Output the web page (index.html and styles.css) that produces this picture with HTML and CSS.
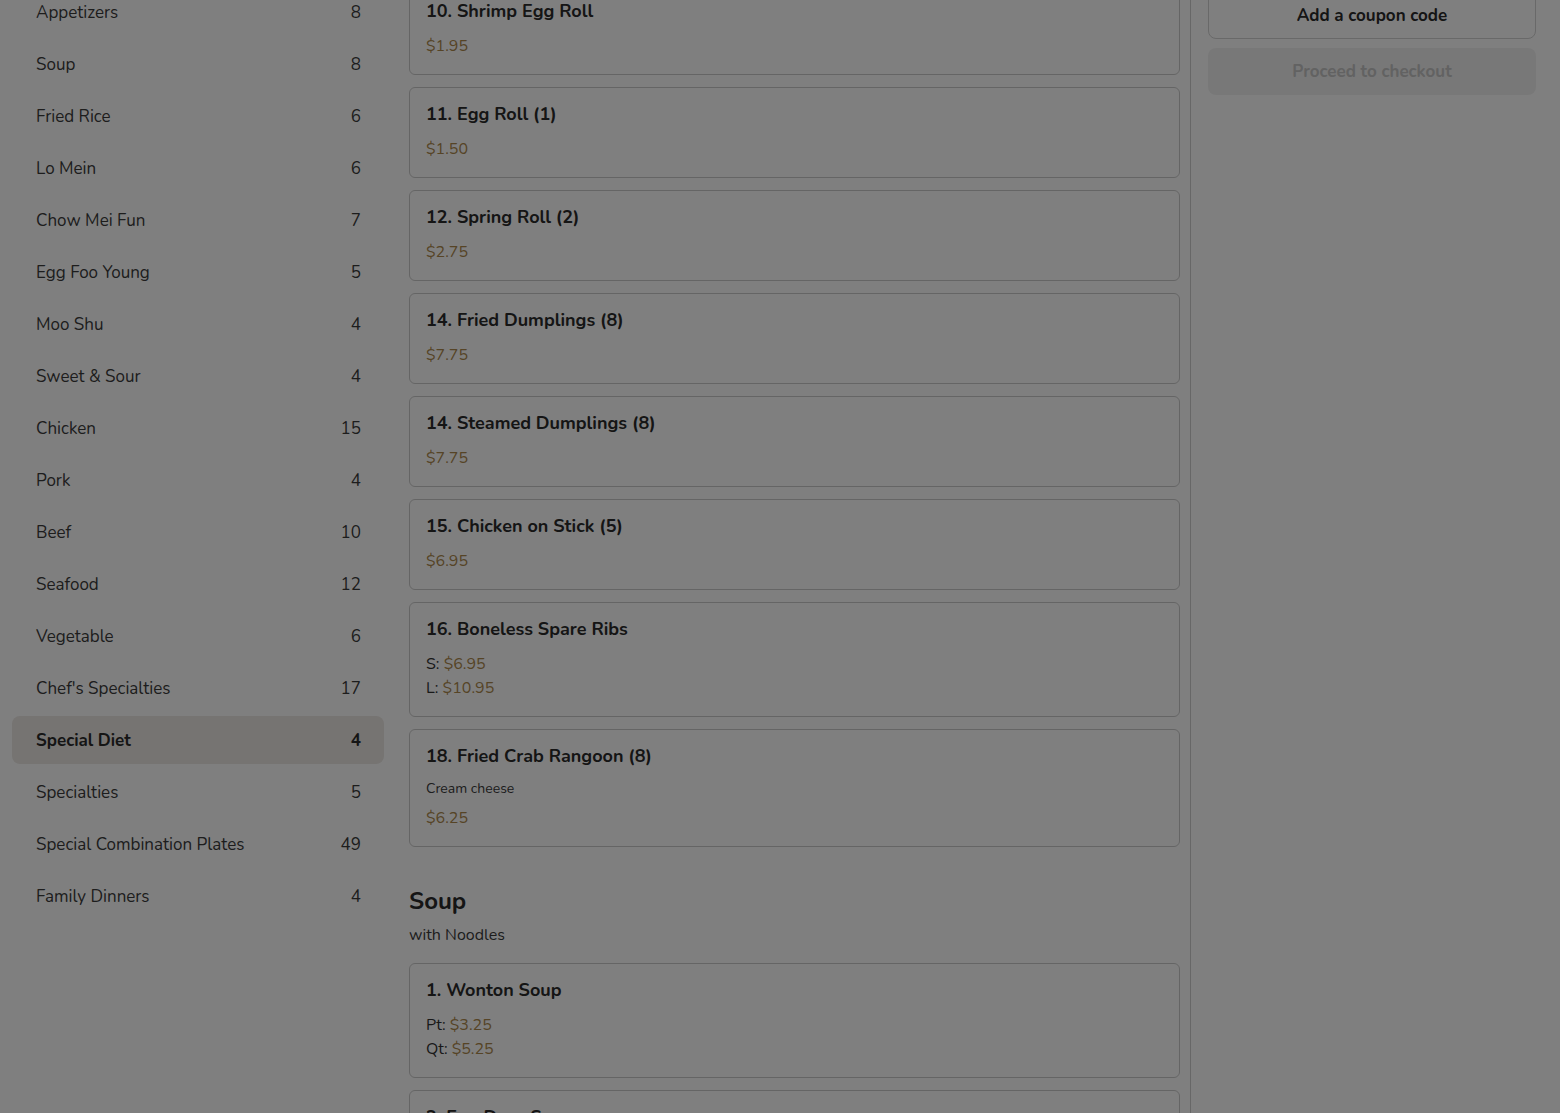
FILE: index.html
```html
<!DOCTYPE html>
<html lang="en">
<head>
<meta charset="utf-8">
<title>Menu</title>
<link rel="stylesheet" href="styles.css">
</head>
<body>
<div class="page">
  <nav class="sidebar">
    <div class="cat"><span>Appetizers</span><span>8</span></div>
    <div class="cat"><span>Soup</span><span>8</span></div>
    <div class="cat"><span>Fried Rice</span><span>6</span></div>
    <div class="cat"><span>Lo Mein</span><span>6</span></div>
    <div class="cat"><span>Chow Mei Fun</span><span>7</span></div>
    <div class="cat"><span>Egg Foo Young</span><span>5</span></div>
    <div class="cat"><span>Moo Shu</span><span>4</span></div>
    <div class="cat"><span>Sweet &amp; Sour</span><span>4</span></div>
    <div class="cat"><span>Chicken</span><span>15</span></div>
    <div class="cat"><span>Pork</span><span>4</span></div>
    <div class="cat"><span>Beef</span><span>10</span></div>
    <div class="cat"><span>Seafood</span><span>12</span></div>
    <div class="cat"><span>Vegetable</span><span>6</span></div>
    <div class="cat"><span>Chef's Specialties</span><span>17</span></div>
    <div class="cat active"><span>Special Diet</span><span>4</span></div>
    <div class="cat"><span>Specialties</span><span>5</span></div>
    <div class="cat"><span>Special Combination Plates</span><span>49</span></div>
    <div class="cat"><span>Family Dinners</span><span>4</span></div>
  </nav>

  <main class="menu">
    <section class="section">
      <div class="cards">
        <div class="card"><div class="title">10. Shrimp Egg Roll</div><div class="prices"><div class="price">$1.95</div></div></div>
        <div class="card"><div class="title">11. Egg Roll (1)</div><div class="prices"><div class="price">$1.50</div></div></div>
        <div class="card"><div class="title">12. Spring Roll (2)</div><div class="prices"><div class="price">$2.75</div></div></div>
        <div class="card"><div class="title">14. Fried Dumplings (8)</div><div class="prices"><div class="price">$7.75</div></div></div>
        <div class="card"><div class="title">14. Steamed Dumplings (8)</div><div class="prices"><div class="price">$7.75</div></div></div>
        <div class="card"><div class="title">15. Chicken on Stick (5)</div><div class="prices"><div class="price">$6.95</div></div></div>
        <div class="card"><div class="title">16. Boneless Spare Ribs</div><div class="prices"><div class="line">S: <span class="price">$6.95</span></div><div class="line">L: <span class="price">$10.95</span></div></div></div>
        <div class="card"><div class="title">18. Fried Crab Rangoon (8)</div><div class="desc">Cream cheese</div><div class="prices after-desc"><div class="price">$6.25</div></div></div>
      </div>
    </section>
    <section class="section">
      <h2 class="sec-title">Soup</h2>
      <p class="sec-sub">with Noodles</p>
      <div class="cards">
        <div class="card"><div class="title">1. Wonton Soup</div><div class="prices"><div class="line">Pt: <span class="price">$3.25</span></div><div class="line">Qt: <span class="price">$5.25</span></div></div></div>
        <div class="card"><div class="title">2. Egg Drop Soup</div><div class="prices"><div class="line">Pt: <span class="price">$3.25</span></div><div class="line">Qt: <span class="price">$5.25</span></div></div></div>
      </div>
    </section>
  </main>

  <aside class="cart">
    <button class="btn coupon">Add a coupon code</button>
    <button class="btn checkout" disabled>Proceed to checkout</button>
  </aside>
</div>
<div class="overlay"></div>
</body>
</html>
```

FILE: styles.css
```css
html, body {
  margin: 0;
  padding: 0;
  height: 100%;
  overflow: hidden;
}
body {
  background: #ffffff;
  font-family: "Nunito", "Lato", "Noto Sans", sans-serif;
  color: #2b2b2b;
}
.page {
  display: flex;
  align-items: flex-start;
  padding-left: 12px;
  height: 1113px;
}
.sidebar {
  width: 372px;
  flex: none;
  margin-top: -12px;
  display: flex;
  flex-direction: column;
  gap: 4px;
}
.cat {
  height: 48px;
  display: flex;
  align-items: center;
  justify-content: space-between;
  padding: 0 23px 0 24px;
  border-radius: 8px;
  font-size: 17px;
  color: #3a3a3a;
}
.cat.active {
  background: #ece8e4;
  font-weight: 700;
  color: #2b2b2b;
}
.menu {
  width: 771px;
  flex: none;
  margin-left: 25px;
  margin-top: -16px;
}
.cards {
  display: flex;
  flex-direction: column;
  gap: 12px;
}
.card {
  border: 1px solid #cbcbcb;
  border-radius: 6px;
  padding: 14px 16px 16px;
}
.title {
  font-size: 18px;
  line-height: 24px;
  font-weight: 700;
  color: #2a2a2a;
}
.prices {
  margin-top: 11px;
  font-size: 16px;
  line-height: 24px;
  color: #333333;
}
.prices.after-desc {
  margin-top: 8px;
}
.price {
  color: #ac884c;
}
.desc {
  margin-top: 12px;
  font-size: 14px;
  line-height: 18px;
  color: #3a3a3a;
}
.section + .section {
  margin-top: 38px;
}
.sec-title {
  margin: 0;
  font-size: 24px;
  line-height: 32px;
  font-weight: 700;
  color: #2a2a2a;
}
.sec-sub {
  margin: 6px 0 16px;
  font-size: 16px;
  line-height: 24px;
  color: #3a3a3a;
}
.cart {
  flex: 1;
  align-self: stretch;
  margin-left: 10px;
  border-left: 1px solid #cfcfcf;
  padding: 0 24px 0 17px;
  display: flex;
  flex-direction: column;
  gap: 9px;
}
.btn {
  font-family: inherit;
  font-size: 17px;
  font-weight: 700;
  height: 48px;
  border-radius: 8px;
  width: 100%;
}
.coupon {
  margin-top: -9px;
  background: #ffffff;
  border: 1px solid #d2d2d2;
  color: #2a2a2a;
}
.checkout {
  height: 47px;
  background: #f1f1f1;
  border: none;
  color: #c4c4c4;
}
.overlay {
  position: fixed;
  inset: 0;
  background: rgba(0, 0, 0, 0.5);
}
```
